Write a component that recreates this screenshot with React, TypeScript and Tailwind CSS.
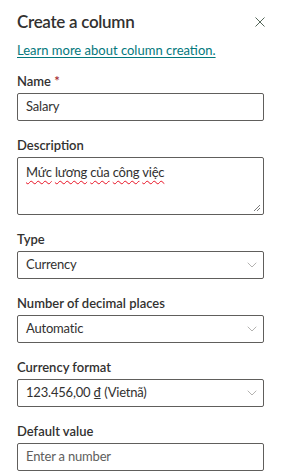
import { ChevronDown } from 'lucide-react';

const font = { fontFamily: 'Lato, "Open Sans", sans-serif' };

function Label({ text }: { text: string }) {
  return (
    <div className="mt-[14px] mb-[2px] text-[13px] leading-[20px] font-semibold text-[#323130]">{text}</div>
  );
}

function Select({ value }: { value: string }) {
  return (
    <div className="h-7 border border-[#605e5c] rounded-[2px] flex items-center justify-between pl-2 pr-[3px] text-[13px] tracking-[-0.2px] text-[#323130]">
      <span>{value}</span>
      <ChevronDown className="w-4 h-4 text-[#a19f9d]" strokeWidth={1.2} />
    </div>
  );
}

export default function App() {
  const words = ['Mức', 'lương', 'của', 'công', 'việc'];
  return (
    <div className="w-[281px] h-[475px] bg-white px-[17px] pt-2 overflow-hidden" style={font}>
      <div className="flex items-center justify-between">
        <div className="text-[17px] leading-[28px] font-semibold tracking-[-0.3px] text-[#323130]">Create a column</div>
        <svg width="10" height="10" viewBox="0 0 10 10" className="mr-[-1px]">
          <path d="M0.5 0.5L9.5 9.5M9.5 0.5L0.5 9.5" stroke="#55675a" strokeWidth="1" />
        </svg>
      </div>
      <a className="block mt-1 text-[13px] leading-[20px] text-[#03787c] underline underline-offset-2">
        Learn more about column creation.
      </a>

      <div className="mt-[11px] mb-[2px] text-[13px] leading-[20px] font-semibold text-[#323130]">
        Name<span className="text-[#a4262c]"> *</span>
      </div>
      <div className="h-7 border border-[#605e5c] rounded-[2px] flex items-center px-2 text-[13px] tracking-[-0.2px] text-[#323130]">Salary</div>

      <Label text="Description" />
      <div className="relative h-[58px] border border-[#605e5c] rounded-[2px] px-2 pt-[4px] text-[13px] tracking-[-0.2px] leading-[20px] text-[#323130]">
        {words.map((w, i) => (
          <span key={i}>
            <span className="underline decoration-wavy decoration-[#e81123] decoration-1 underline-offset-[3px]">{w}</span>
            {i < words.length - 1 ? ' ' : ''}
          </span>
        ))}
        <svg className="absolute right-[2px] bottom-[2px]" width="8" height="8" viewBox="0 0 8 8">
          <path d="M7 1L1 7M7 4L4 7" stroke="#7a7a7a" strokeWidth="1" />
        </svg>
      </div>

      <Label text="Type" />
      <Select value="Currency" />

      <Label text="Number of decimal places" />
      <Select value="Automatic" />

      <Label text="Currency format" />
      <Select value="123.456,00 ₫ (Vietnã)" />

      <Label text="Default value" />
      <div className="h-7 border border-[#605e5c] rounded-[2px] flex items-center px-2 text-[13px] tracking-[-0.2px] text-[#605e5c]">Enter a number</div>
    </div>
  );
}
